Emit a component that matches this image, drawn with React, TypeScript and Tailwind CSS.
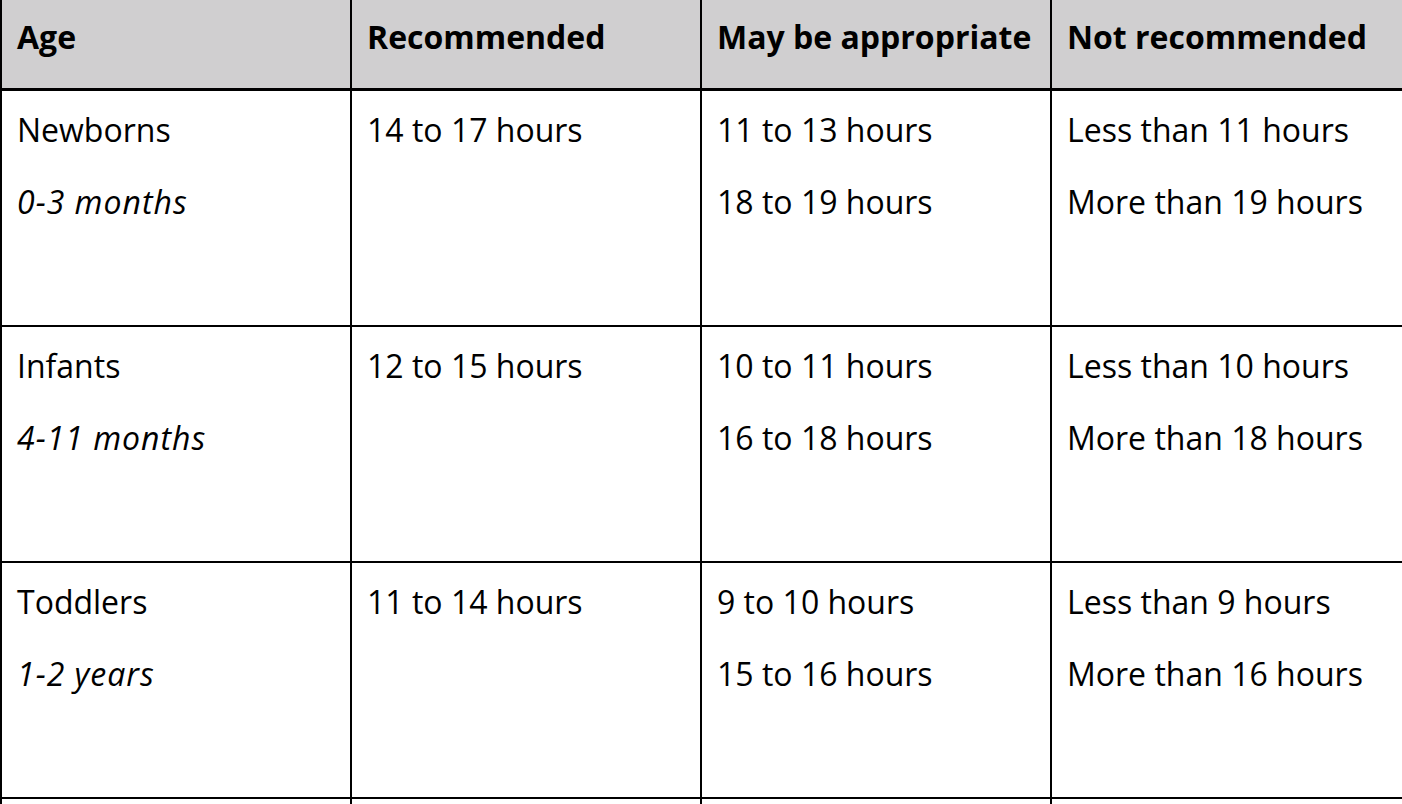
const rows = [
  {
    age: "Newborns",
    range: "0-3 months",
    rec: "14 to 17 hours",
    may: ["11 to 13 hours", "18 to 19 hours"],
    not: ["Less than 11 hours", "More than 19 hours"],
  },
  {
    age: "Infants",
    range: "4-11 months",
    rec: "12 to 15 hours",
    may: ["10 to 11 hours", "16 to 18 hours"],
    not: ["Less than 10 hours", "More than 18 hours"],
  },
  {
    age: "Toddlers",
    range: "1-2 years",
    rec: "11 to 14 hours",
    may: ["9 to 10 hours", "15 to 16 hours"],
    not: ["Less than 9 hours", "More than 16 hours"],
  },
];

const headers = ["Age", "Recommended", "May be appropriate", "Not recommended"];

function Cell({ children }: { children?: React.ReactNode }) {
  return (
    <div className="flex w-[350px] shrink-0 flex-col gap-[30px] border-l-2 border-black px-[15px] pt-[18px]">
      {children}
    </div>
  );
}

export default function App() {
  return (
    <div className="h-[804px] w-[1402px] overflow-hidden bg-white text-[32px] leading-[42px] text-black" style={{ fontFamily: '"Open Sans", "Noto Sans", sans-serif' }}>
      <div className="w-[1420px]">
        <div className="flex h-[91px] border-b-[3px] border-black bg-[#d0cfd0]">
          {headers.map((h) => (
            <div key={h} className="flex w-[350px] shrink-0 items-center border-l-2 border-black px-[15px] pb-[14px] font-bold">
              {h}
            </div>
          ))}
        </div>
        {rows.map((r) => (
          <div key={r.age} className="flex h-[236px] border-b-2 border-black">
            <Cell>
              <p>{r.age}</p>
              <p className="italic tracking-[1px]">{r.range}</p>
            </Cell>
            <Cell>
              <p>{r.rec}</p>
            </Cell>
            <Cell>
              {r.may.map((t) => (
                <p key={t}>{t}</p>
              ))}
            </Cell>
            <Cell>
              {r.not.map((t) => (
                <p key={t}>{t}</p>
              ))}
            </Cell>
          </div>
        ))}
        <div className="flex h-[40px]">
          <Cell />
          <Cell />
          <Cell />
          <Cell />
        </div>
      </div>
    </div>
  );
}
